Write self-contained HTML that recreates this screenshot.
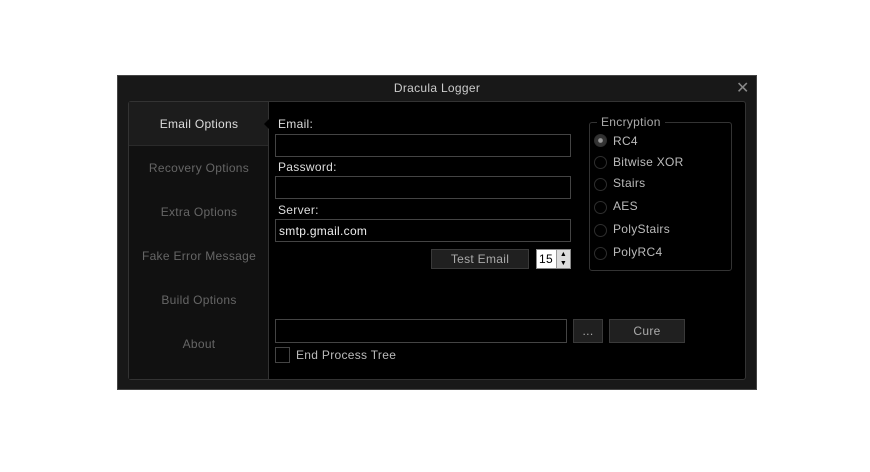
<!DOCTYPE html><html><head><style>
body{margin:0;width:870px;height:472px;background:#fff;font-family:"Liberation Sans",sans-serif;font-size:12px;letter-spacing:0.3px;position:relative;overflow:hidden}
.a{position:absolute;box-sizing:border-box}
.in{border:1px solid #444;background:#000}
.lbl{color:#ddd}
.tab{left:0;width:140px;text-align:center;color:#666;font-size:12px}
.btn{background:#202020;border:1px solid #3a3a3a;color:#aaa;text-align:center}
.r{width:13px;height:13px;border:1px solid #2e2e2e;border-radius:50%;left:4px}
.rt{left:23px;color:#bbb}
</style></head><body>
<div class="a" style="left:117px;top:75px;width:640px;height:315px;background:#181818;border:1px solid #444"></div>
<div class="a" style="left:117px;top:81px;width:640px;text-align:center;color:#ccc">Dracula Logger</div>
<div class="a" style="left:736px;top:78px;color:#888;font-size:16px">✕</div>
<div class="a" style="left:128px;top:101px;width:618px;height:279px;background:#000;border:1px solid #333;border-radius:3px"></div>
<div class="a" style="left:129px;top:102px;width:140px;height:277px;background:#111;border-right:1px solid #333">
<div class="a" style="left:0;top:0;width:139px;height:44px;background:#1c1c1c;border-bottom:1px solid #2a2a2a"></div>
<div class="a tab" style="top:15px;color:#ddd">Email Options</div>
<div class="a tab" style="top:59px">Recovery Options</div>
<div class="a tab" style="top:103px">Extra Options</div>
<div class="a tab" style="top:147px">Fake Error Message</div>
<div class="a tab" style="top:191px">Build Options</div>
<div class="a tab" style="top:235px">About</div>
</div>
<div class="a" style="left:264px;top:119px;width:0;height:0;border-top:5px solid transparent;border-bottom:5px solid transparent;border-right:5px solid #000"></div>
<div class="a lbl" style="left:278px;top:117px">Email:</div>
<div class="a in" style="left:275px;top:134px;width:296px;height:23px"></div>
<div class="a lbl" style="left:278px;top:160px">Password:</div>
<div class="a in" style="left:275px;top:176px;width:296px;height:23px"></div>
<div class="a lbl" style="left:278px;top:203px">Server:</div>
<div class="a in" style="left:275px;top:219px;width:296px;height:23px;color:#eee;padding:4px 0 0 3px">smtp.gmail.com</div>
<div class="a btn" style="left:431px;top:249px;width:98px;height:20px;padding-top:2px">Test Email</div>
<div class="a" style="left:536px;top:249px;width:35px;height:20px;background:#fff;border:1px solid #888;color:#000;padding:2px 0 0 2px">15</div>
<div class="a" style="left:556px;top:250px;width:14px;height:18px;background:#ddd;border-left:1px solid #999;font-size:7px;line-height:9px;text-align:center">▲<br>▼</div>
<div class="a" style="left:589px;top:122px;width:143px;height:149px;border:1px solid #333;border-radius:3px">
<div class="a" style="left:7px;top:-8px;background:#000;color:#aaa;padding:0 4px">Encryption</div>
<div class="a r" style="top:11px;background:radial-gradient(#999 25%,#333 35%)"></div><div class="a rt" style="top:11px">RC4</div>
<div class="a r" style="top:33px"></div><div class="a rt" style="top:32px">Bitwise XOR</div>
<div class="a r" style="top:55px"></div><div class="a rt" style="top:53px">Stairs</div>
<div class="a r" style="top:78px"></div><div class="a rt" style="top:76px">AES</div>
<div class="a r" style="top:101px"></div><div class="a rt" style="top:99px">PolyStairs</div>
<div class="a r" style="top:124px"></div><div class="a rt" style="top:122px">PolyRC4</div>
</div>
<div class="a in" style="left:275px;top:319px;width:292px;height:24px"></div>
<div class="a btn" style="left:573px;top:319px;width:30px;height:24px;padding-top:4px">...</div>
<div class="a btn" style="left:609px;top:319px;width:76px;height:24px;padding-top:4px">Cure</div>
<div class="a" style="left:275px;top:347px;width:15px;height:16px;border:1px solid #444"></div>
<div class="a" style="left:296px;top:348px;color:#bbb">End Process Tree</div>
</body></html>
